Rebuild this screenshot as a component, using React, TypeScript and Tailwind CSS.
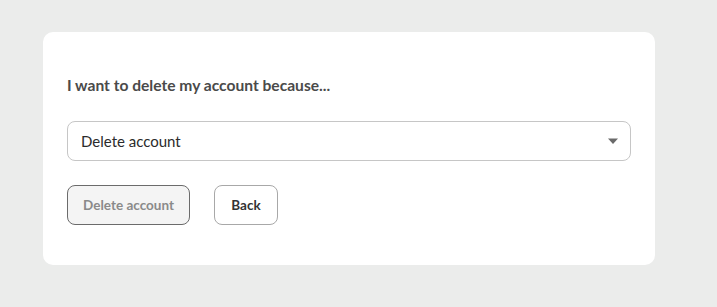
const App = () => {
  return (
    <main
      className="min-h-[307px] w-full bg-[#ebeceb] pl-[43px] pt-[32px]"
      style={{ fontFamily: "Lato, 'Open Sans', sans-serif" }}
    >
      <section className="w-[612px] rounded-[10px] bg-white px-6 pb-[40px] pt-[43px]">
        <label className="block text-[15.6px] font-bold leading-5 text-[#4a4a4a]">
          I want to delete my account because...
        </label>
        <div className="mt-[26px] flex h-10 items-center justify-between rounded-lg border border-[#c6c6c6] pl-[13px] pr-[10px]">
          <span className="text-[15px] text-[#2b2b2b]">Delete account</span>
          <svg width="12" height="8" viewBox="0 0 12 8" className="mr-[1px]">
            <path d="M1 1.5h10L6 7z" fill="#6a6a6a" />
          </svg>
        </div>
        <div className="mt-[24px] flex gap-6">
          <button className="h-10 w-[123px] rounded-lg border border-[#6b6b6b] bg-[#f4f4f4] text-[13.5px] font-bold text-[#8a8a8a]">
            Delete account
          </button>
          <button className="h-10 w-[64px] rounded-lg border border-[#a8a8a8] bg-white text-[13.5px] font-bold text-[#333]">
            Back
          </button>
        </div>
      </section>
    </main>
  );
};

export default App;
